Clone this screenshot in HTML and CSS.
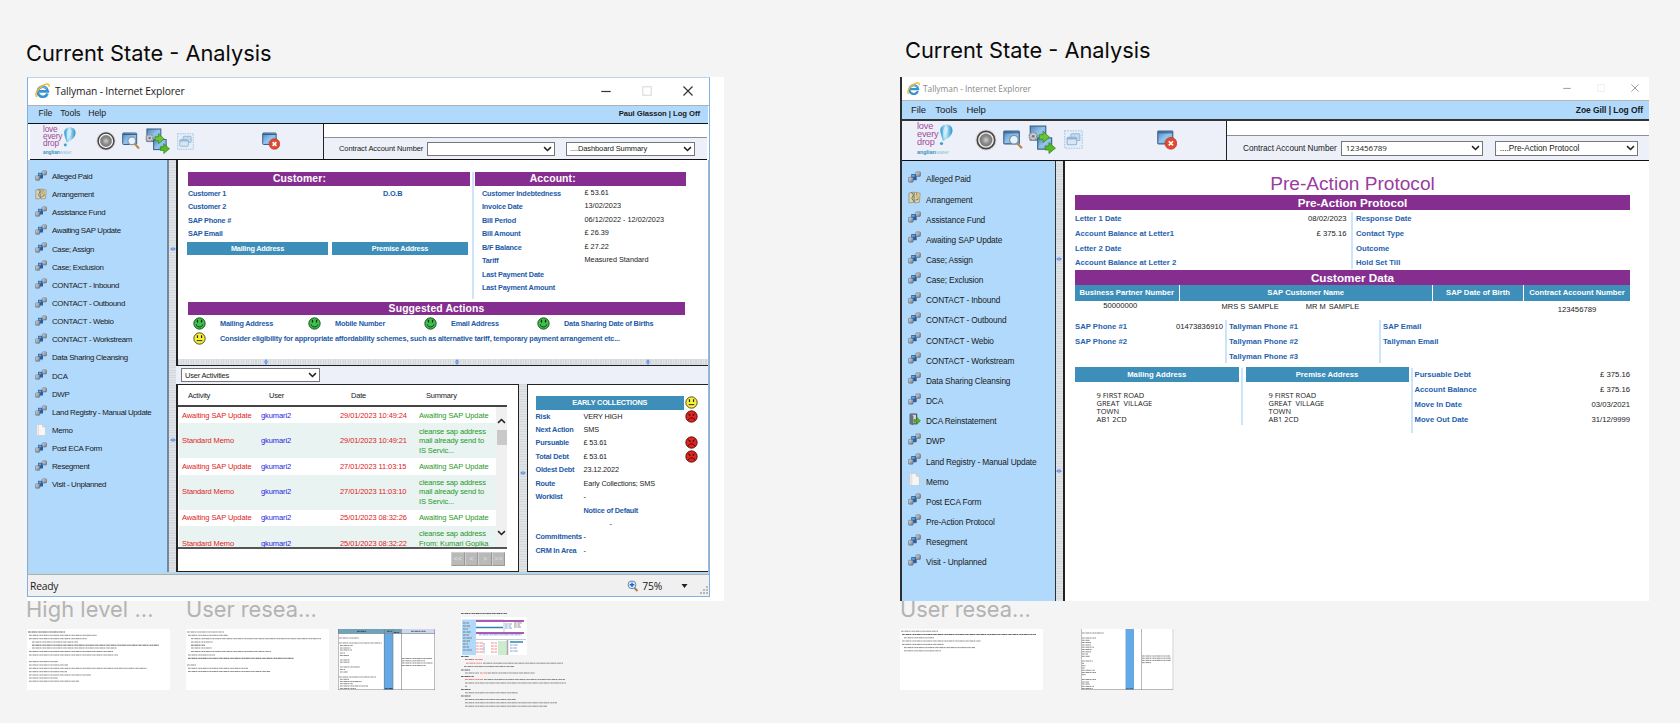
FILE: index.html
```html
<!DOCTYPE html>
<html lang="en">
<head>
<meta charset="utf-8">
<title>Current State - Analysis</title>
<link rel="stylesheet" href="styles.css">
</head>
<body>
<svg class="defs" width="0" height="0">
  <defs>
    <linearGradient id="gScreen" x1="0" y1="0" x2="1" y2="1"><stop offset="0" stop-color="#4a84bd"/><stop offset=".5" stop-color="#94c4ec"/><stop offset="1" stop-color="#6ba3d6"/></linearGradient>
    <linearGradient id="gBox" x1="0" y1="0" x2="1" y2="1"><stop offset="0" stop-color="#dcdfe4"/><stop offset="1" stop-color="#6f7782"/></linearGradient>
    <radialGradient id="gBall"><stop offset="0" stop-color="#d0d0d0"/><stop offset=".6" stop-color="#8c8c8c"/><stop offset="1" stop-color="#777"/></radialGradient>
    <linearGradient id="gDrop" x1="0" y1="0" x2="1" y2="0"><stop offset="0" stop-color="#2a9bd4"/><stop offset=".45" stop-color="#bfe8f8"/><stop offset="1" stop-color="#2b93cf"/></linearGradient>
  </defs>
  <symbol id="ie" viewBox="0 0 16 16">
    <path d="M13.400 11.200A5.400 5.400 0 1 1 13.700 8.900H4.500" fill="none" stroke="#3a93cf" stroke-width="2.800"/>
    <path d="M12.500 6A5 5 0 0 0 4.500 6.500" fill="none" stroke="#7cc4ee" stroke-width="1"/>
    <path d="M2 14.800C-.8 12.500 3 5.500 8.500 2.600 12.500.2 15.800.3 15 4" fill="none" stroke="#f0b92d" stroke-width="1.600"/>
  </symbol>
  <symbol id="drop" viewBox="0 0 14 22">
    <path d="M7.500.5c3.800 0 6 2.600 6 5.800 0 5-4.500 8.500-9.500 10.700C3 13 1.300 9.800 1.300 6.300 1.300 3 3.700.5 7.500.5z" fill="url(#gDrop)"/>
    <path d="M6 3c2-1 3.500.5 3 3.500S6 13 4.800 14.500C4 11 3.500 5 6 3z" fill="#d9f2fb" opacity=".7"/>
    <circle cx="2.500" cy="19.500" r="1.600" fill="#3a9fd6"/>
  </symbol>
  <symbol id="ball" viewBox="0 0 20 20">
    <circle cx="10" cy="10" r="9.600" fill="#d6d6d6"/>
    <circle cx="10" cy="10" r="7.900" fill="#f8f8f8" stroke="#454545" stroke-width="1.500"/>
    <circle cx="10" cy="10" r="5.700" fill="url(#gBall)" stroke="#777" stroke-width=".4"/>
  </symbol>
  <symbol id="search" viewBox="0 0 18 18">
    <rect x=".7" y="1" width="14" height="11.500" rx=".8" fill="url(#gScreen)" stroke="#3c6289"/>
    <path d="M1 2.500h13.500" stroke="#31618f"/>
    <path d="M12.500 11.500l4.500 5" stroke="#b58a50" stroke-width="2"/>
    <circle cx="9.800" cy="8.800" r="3.900" fill="#e4f3fd" stroke="#7f94a8" stroke-width="1.100"/>
  </symbol>
  <symbol id="transfer" viewBox="0 0 26 27">
    <rect x="2" y="1" width="14.500" height="13" fill="url(#gScreen)" stroke="#355a80"/>
    <rect x="9" y="12" width="13" height="10.500" fill="url(#gScreen)" stroke="#355a80"/>
    <circle cx="4.800" cy="10.500" r="3.600" fill="#c9cdd2" stroke="#8b9096" stroke-width="1.600" stroke-dasharray="1.500 .8"/>
    <circle cx="4.800" cy="10.500" r="1.300" fill="#71787f"/>
    <path d="M10.500 9h3.500V6l6 5.300-6 5v-3h-3.500z" fill="#69c531" stroke="#37851a" stroke-width=".7"/>
    <path d="M16 19.500h3.500v-3.200l6 5.300-6 5v-3.300H16z" fill="#58b82a" stroke="#37851a" stroke-width=".7"/>
  </symbol>
  <symbol id="stack" viewBox="0 0 18 18">
    <rect x=".7" y=".7" width="16.600" height="16.600" fill="#e4eef8" stroke="#a5c3df" stroke-width="1" stroke-dasharray="1.500 1"/>
    <rect x="6.500" y="3.500" width="8.500" height="6.500" rx="1" fill="#c5daee" stroke="#95b6d6"/>
    <rect x="3" y="7" width="9" height="7" rx="1" fill="#d8e6f3" stroke="#95b6d6"/>
    <path d="M3 8.300h9" stroke="#86aacd" stroke-width="1.200"/>
  </symbol>
  <symbol id="close" viewBox="0 0 18 18">
    <rect x=".7" y="1" width="13.500" height="11.500" rx=".8" fill="url(#gScreen)" stroke="#3c6289"/>
    <path d="M1 2.500h13" stroke="#31618f"/>
    <circle cx="12.500" cy="12" r="5.300" fill="#e2492f" stroke="#b5321e" stroke-width=".6"/>
    <path d="M10.600 10.100l3.800 3.800m0-3.800l-3.800 3.800" stroke="#fff" stroke-width="1.500"/>
  </symbol>
  <symbol id="node" viewBox="0 0 12 12">
    <path d="M3 2.800h5V8.500H3z" fill="#2a5c9e"/>
    <path d="M3.600 3.500h2.600v1.800H3.600z" fill="#66a8dd"/>
    <rect x=".4" y="5.800" width="4.400" height="4.500" rx=".8" fill="url(#gBox)" stroke="#59616c" stroke-width=".5"/>
    <rect x="7.200" y=".8" width="4.300" height="4.200" rx=".8" fill="url(#gBox)" stroke="#59616c" stroke-width=".5"/>
  </symbol>
  <symbol id="arrange" viewBox="0 0 12 12">
    <path d="M.8 2l4.500-1v9.500L.8 11zM6 1l5.200 1-.7 8.500-4.500.5z" fill="#d9d2b8" stroke="#8f8563" stroke-width=".6"/>
    <path d="M3 1l2 2.500L3.500 7 6 10M8 2v4l2 .5M7 8.500l2.500-1" fill="none" stroke="#6f663f" stroke-width=".8"/>
    <path d="M7.500 3.500h2.500v3H7.500z" fill="#e5bd55"/>
  </symbol>
  <symbol id="memo" viewBox="0 0 12 12">
    <path d="M1.700.4h6L10.500 3v8.600H1.700z" fill="#f6f6f4" stroke="#b9c0c6" stroke-width=".5"/>
    <path d="M3.400.6v10.800" stroke="#e6b9b5" stroke-width=".5"/>
    <path d="M7.700.4V3h2.800" fill="#ddd" stroke="#aaa" stroke-width=".4"/>
  </symbol>
  <symbol id="reinstate" viewBox="0 0 12 12">
    <path d="M2 1h6v9H2z" fill="#d4d9dd" stroke="#30353a" stroke-width=".9"/>
    <path d="M2 1l3 1.500V11.500L2 10z" fill="#6a737b"/>
    <path d="M5.500 6h2.500V3.800l3.500 3.500L8 10.500V8.500H5.500z" fill="#4fae26" stroke="#2c7414" stroke-width=".4"/>
  </symbol>
  <symbol id="happy" viewBox="0 0 14 14">
    <circle cx="7" cy="7" r="6.100" fill="#3fc04c" stroke="#16451a" stroke-width="1"/>
    <path d="M4.800 3v3M9.200 3v3" stroke="#0b2a0d" stroke-width="1.400"/>
    <path d="M3.300 8c1 3.600 6.400 3.600 7.400 0" fill="none" stroke="#0b2a0d" stroke-width="1"/>
  </symbol>
  <symbol id="neutral" viewBox="0 0 14 14">
    <circle cx="7" cy="7" r="6.100" fill="#f7f03a" stroke="#45420f" stroke-width="1"/>
    <path d="M4.800 3.500v3M9.200 3.500v3" stroke="#222" stroke-width="1.300"/>
    <path d="M4 9.300h6" stroke="#222" stroke-width="1"/>
  </symbol>
  <symbol id="sad" viewBox="0 0 14 14">
    <circle cx="7" cy="7" r="6.100" fill="#e22420" stroke="#4a0d0b" stroke-width="1"/>
    <path d="M3.500 4l2.300 1.500M10.500 4L8.200 5.500M5 5v1.300M9 5v1.300" stroke="#3a0504" stroke-width="1"/>
    <path d="M3.600 10.800c1-3.200 5.800-3.200 6.800 0" fill="none" stroke="#3a0504" stroke-width="1"/>
  </symbol>
  <symbol id="chev" viewBox="0 0 10 7"><path d="M1 1.300l4 4 4-4" fill="none" stroke="#222" stroke-width="1.700"/></symbol>
  <symbol id="grip" viewBox="0 0 6 4"><path d="M0 2L2.700 0v4zM6 2L3.300 0v4z" fill="#5f90ee"/></symbol>
  <symbol id="wmin" viewBox="0 0 10 10"><path d="M.3 5.500h9.400" stroke="currentColor" stroke-width="1.200"/></symbol>
  <symbol id="wmax" viewBox="0 0 10 10"><rect x=".8" y=".8" width="8.400" height="8.400" fill="none" stroke="currentColor"/></symbol>
  <symbol id="wclose" viewBox="0 0 10 10"><path d="M.5.500l9 9m0-9l-9 9" stroke="currentColor" stroke-width="1.200"/></symbol>
</svg>

<main class="canvas">
  <h2 class="caption cap-a">Current State - Analysis</h2>
  <h2 class="caption cap-b">Current State - Analysis</h2>

  <p class="label lab-a">High level ...</p>
  <p class="label lab-b">User resea...</p>
  <p class="label lab-c">User resea...</p>

  <div class="sheet"></div>

  <section class="win one">
    <header class="title">
      <svg class="ie"><use href="#ie"/></svg><span>Tallyman - Internet Explorer</span>
      <div class="ctl"><svg><use href="#wmin"/></svg><svg class="dim"><use href="#wmax"/></svg><svg><use href="#wclose"/></svg></div>
    </header>
    <nav class="menu"><span>File</span><span>Tools</span><span>Help</span><b>Paul Glasson | Log Off</b></nav>
    <div class="tools">
      <div class="icons">
        <div class="logo"><div class="love">love<br>every<br>drop</div><svg><use href="#drop"/></svg><div class="water"><b>anglian</b>water</div></div>
        <svg class="i-ball"><use href="#ball"/></svg><svg class="i-search"><use href="#search"/></svg><svg class="i-transfer"><use href="#transfer"/></svg><svg class="i-stack"><use href="#stack"/></svg><svg class="i-close"><use href="#close"/></svg>
      </div>
      <div class="find">
        <div class="blank"></div>
        <div class="fields"><span>Contract Account Number</span><div class="select s1"><svg><use href="#chev"/></svg></div><div class="select s2">....Dashboard Summary<svg><use href="#chev"/></svg></div></div>
      </div>
    </div>
    <div class="body">
      <ul class="side">
        <li><svg><use href="#node"/></svg>Alleged Paid</li>
        <li><svg><use href="#arrange"/></svg>Arrangement</li>
        <li><svg><use href="#node"/></svg>Assistance Fund</li>
        <li><svg><use href="#node"/></svg>Awaiting SAP Update</li>
        <li><svg><use href="#node"/></svg>Case; Assign</li>
        <li><svg><use href="#node"/></svg>Case; Exclusion</li>
        <li><svg><use href="#node"/></svg>CONTACT - Inbound</li>
        <li><svg><use href="#node"/></svg>CONTACT - Outbound</li>
        <li><svg><use href="#node"/></svg>CONTACT - Webio</li>
        <li><svg><use href="#node"/></svg>CONTACT - Workstream</li>
        <li><svg><use href="#node"/></svg>Data Sharing Cleansing</li>
        <li><svg><use href="#node"/></svg>DCA</li>
        <li><svg><use href="#node"/></svg>DWP</li>
        <li><svg><use href="#node"/></svg>Land Registry - Manual Update</li>
        <li><svg><use href="#memo"/></svg>Memo</li>
        <li><svg><use href="#node"/></svg>Post ECA Form</li>
        <li><svg><use href="#node"/></svg>Resegment</li>
        <li><svg><use href="#node"/></svg>Visit - Unplanned</li>
      </ul>
      <div class="vsplit grips"><svg><use href="#grip"/></svg><svg><use href="#grip"/></svg></div>
      <div class="main">
        <div class="dash">
          <div class="two">
            <div class="customer">
              <h3 class="bar">Customer:</h3>
              <div class="rows"><p class="lb duo"><span>Customer 1</span><span>D.O.B</span></p><p class="lb">Customer 2</p><p class="lb">SAP Phone #</p><p class="lb">SAP Email</p></div>
              <div class="addr"><h4 class="teal">Mailing Address</h4><h4 class="teal">Premise Address</h4></div>
            </div>
            <div class="account">
              <h3 class="bar">Account:</h3>
              <dl class="rows pairs">
                <dt>Customer Indebtedness</dt><dd>£ 53.61</dd>
                <dt>Invoice Date</dt><dd>13/02/2023</dd>
                <dt>Bill Period</dt><dd>06/12/2022 - 12/02/2023</dd>
                <dt>Bill Amount</dt><dd>£ 26.39</dd>
                <dt>B/F Balance</dt><dd>£ 27.22</dd>
                <dt>Tariff</dt><dd>Measured Standard</dd>
                <dt>Last Payment Date</dt><dd></dd>
                <dt>Last Payment Amount</dt><dd></dd>
              </dl>
            </div>
          </div>
          <h3 class="bar">Suggested Actions</h3>
          <div class="sugg">
            <svg><use href="#happy"/></svg><span>Mailing Address</span>
            <svg><use href="#happy"/></svg><span>Mobile Number</span>
            <svg><use href="#happy"/></svg><span>Email Address</span>
            <svg><use href="#happy"/></svg><span>Data Sharing Date of Births</span>
            <svg><use href="#neutral"/></svg><span class="wide">Consider eligibility for appropriate affordability schemes, such as alternative tariff, temporary payment arrangement etc...</span>
          </div>
        </div>
        <div class="hsplit"><svg><use href="#grip"/></svg><svg><use href="#grip"/></svg><svg><use href="#grip"/></svg></div>
        <div class="pick"><div class="select s3">User Activities<svg><use href="#chev"/></svg></div></div>
        <div class="lower">
          <div class="acts">
            <div class="ahead"><span>Activity</span><span>User</span><span>Date</span><span>Summary</span></div>
            <div class="ascroll">
              <div class="alist">
                <div class="r short"><i>Awaiting SAP Update</i><b>gkumari2</b><i>29/01/2023 10:49:24</i><u>Awaiting SAP Update</u></div>
                <div class="r alt"><i>Standard Memo</i><b>gkumari2</b><i>29/01/2023 10:49:21</i><u>cleanse sap address<br>mail already send to<br>IS Servic...</u></div>
                <div class="r short"><i>Awaiting SAP Update</i><b>gkumari2</b><i>27/01/2023 11:03:15</i><u>Awaiting SAP Update</u></div>
                <div class="r alt"><i>Standard Memo</i><b>gkumari2</b><i>27/01/2023 11:03:10</i><u>cleanse sap address<br>mail already send to<br>IS Servic...</u></div>
                <div class="r short"><i>Awaiting SAP Update</i><b>gkumari2</b><i>25/01/2023 08:32:26</i><u>Awaiting SAP Update</u></div>
                <div class="r alt"><i>Standard Memo</i><b>gkumari2</b><i>25/01/2023 08:32:22</i><u>cleanse sap address<br>From: Kumari Gopika<br>&nbsp;</u></div>
              </div>
              <div class="sbar"><svg class="up"><use href="#chev"/></svg><div class="thumb"></div><svg><use href="#chev"/></svg></div>
            </div>
            <div class="pager"><span>&lt;&lt;</span><span>&lt;</span><span>&gt;</span><span>&gt;&gt;</span></div>
          </div>
          <div class="vsplit inner grips"><svg><use href="#grip"/></svg></div>
          <div class="early">
            <div class="ehead"><h4 class="teal">EARLY COLLECTIONS</h4><svg><use href="#neutral"/></svg></div>
            <div class="erows">
              <b>Risk</b><span>VERY HIGH</span><svg><use href="#sad"/></svg>
              <b>Next Action</b><span>SMS</span><em></em>
              <b>Pursuable</b><span>£ 53.61</span><svg><use href="#sad"/></svg>
              <b>Total Debt</b><span>£ 53.61</span><svg><use href="#sad"/></svg>
              <b>Oldest Debt</b><span>23.12.2022</span><em></em>
              <b>Route</b><span>Early Collections; SMS</span><em></em>
              <b>Worklist</b><span>-</span><em></em>
              <em></em><b>Notice of Default</b><em></em>
              <em></em><span class="mid">-</span><em></em>
              <b>Commitments</b><span>-</span><em></em>
              <b>CRM In Area</b><span>-</span><em></em>
            </div>
          </div>
        </div>
      </div>
    </div>
    <footer class="status"><span>Ready</span>
      <svg class="mag" viewBox="0 0 12 12"><path d="M7 7.500l3.500 3.500" stroke="#b5793d" stroke-width="2"/><circle cx="5" cy="4.800" r="3.900" fill="#e4f1fc" stroke="#5f86b5"/><path d="M5 2.500v4.600M2.700 4.800h4.600" stroke="#1766c4" stroke-width="1.400"/></svg>
      <span>75%</span>
      <svg class="tri" viewBox="0 0 6 4"><path d="M0 0h6L3 4z" fill="#222"/></svg>
      <svg class="size" viewBox="0 0 8 8"><path d="M6 0h2v2H6zM3 3h2v2H3zM6 3h2v2H6zM0 6h2v2H0zM3 6h2v2H3zM6 6h2v2H6z" fill="#b8b8b8"/></svg>
    </footer>
  </section>

  <section class="win two-w">
    <header class="title">
      <svg class="ie"><use href="#ie"/></svg><span>Tallyman - Internet Explorer</span>
      <div class="ctl"><svg><use href="#wmin"/></svg><svg class="dim"><use href="#wmax"/></svg><svg><use href="#wclose"/></svg></div>
    </header>
    <nav class="menu"><span>File</span><span>Tools</span><span>Help</span><b>Zoe Gill | Log Off</b></nav>
    <div class="tools">
      <div class="icons">
        <div class="logo"><div class="love">love<br>every<br>drop</div><svg><use href="#drop"/></svg><div class="water"><b>anglian</b>water</div></div>
        <svg class="i-ball"><use href="#ball"/></svg><svg class="i-search"><use href="#search"/></svg><svg class="i-transfer"><use href="#transfer"/></svg><svg class="i-stack"><use href="#stack"/></svg><svg class="i-close"><use href="#close"/></svg>
      </div>
      <div class="find">
        <div class="blank"></div>
        <div class="fields"><span>Contract Account Number</span><div class="select s1"><em>123456789</em><svg><use href="#chev"/></svg></div><div class="select s2">....Pre-Action Protocol<svg><use href="#chev"/></svg></div></div>
      </div>
    </div>
    <div class="body">
      <ul class="side">
        <li><svg><use href="#node"/></svg>Alleged Paid</li>
        <li><svg><use href="#arrange"/></svg>Arrangement</li>
        <li><svg><use href="#node"/></svg>Assistance Fund</li>
        <li><svg><use href="#node"/></svg>Awaiting SAP Update</li>
        <li><svg><use href="#node"/></svg>Case; Assign</li>
        <li><svg><use href="#node"/></svg>Case; Exclusion</li>
        <li><svg><use href="#node"/></svg>CONTACT - Inbound</li>
        <li><svg><use href="#node"/></svg>CONTACT - Outbound</li>
        <li><svg><use href="#node"/></svg>CONTACT - Webio</li>
        <li><svg><use href="#node"/></svg>CONTACT - Workstream</li>
        <li><svg><use href="#node"/></svg>Data Sharing Cleansing</li>
        <li><svg><use href="#node"/></svg>DCA</li>
        <li><svg><use href="#reinstate"/></svg>DCA Reinstatement</li>
        <li><svg><use href="#node"/></svg>DWP</li>
        <li><svg><use href="#node"/></svg>Land Registry - Manual Update</li>
        <li><svg><use href="#memo"/></svg>Memo</li>
        <li><svg><use href="#node"/></svg>Post ECA Form</li>
        <li><svg><use href="#node"/></svg>Pre-Action Protocol</li>
        <li><svg><use href="#node"/></svg>Resegment</li>
        <li><svg><use href="#node"/></svg>Visit - Unplanned</li>
      </ul>
      <div class="vsplit grips"><svg><use href="#grip"/></svg><svg><use href="#grip"/></svg></div>
      <div class="proto">
        <h1>Pre-Action Protocol</h1>
        <h3 class="bar">Pre-Action Protocol</h3>
        <div class="letters">
          <dl><dt>Letter 1 Date</dt><dd>08/02/2023</dd><dt>Account Balance at Letter1</dt><dd>£ 375.16</dd><dt>Letter 2 Date</dt><dd></dd><dt>Account Balance at Letter 2</dt><dd></dd></dl>
          <dl class="lined"><dt>Response Date</dt><dd></dd><dt>Contact Type</dt><dd></dd><dt>Outcome</dt><dd></dd><dt>Hold Set Till</dt><dd></dd></dl>
        </div>
        <h3 class="bar">Customer Data</h3>
        <div class="ctable">
          <h4 class="teal">Business Partner Number</h4><h4 class="teal">SAP Customer Name</h4><h4 class="teal">SAP Date of Birth</h4><h4 class="teal">Contract Account Number</h4>
          <span class="hv bp">50000000</span><span class="names"><span>MRS S</span><span>SAMPLE</span><span>MR M</span><span>SAMPLE</span></span><span></span><span class="hv acc">123456789</span>
        </div>
        <div class="phones">
          <dl><dt>SAP Phone #1</dt><dd>01473836910</dd><dt>SAP Phone #2</dt><dd></dd></dl>
          <dl class="lined"><dt>Tallyman Phone #1</dt><dd></dd><dt>Tallyman Phone #2</dt><dd></dd><dt>Tallyman Phone #3</dt><dd></dd></dl>
          <dl class="lined"><dt>SAP Email</dt><dd></dd><dt>Tallyman Email</dt><dd></dd></dl>
        </div>
        <div class="places">
          <div><h4 class="teal">Mailing Address</h4><address>9 FIRST ROAD<br>GREAT&nbsp; VILLAGE<br>TOWN<br>AB1 2CD</address></div>
          <div class="rule"></div>
          <div><h4 class="teal">Premise Address</h4><address class="shift">9 FIRST ROAD<br>GREAT&nbsp; VILLAGE<br>TOWN<br>AB1 2CD</address></div>
          <dl class="lined"><dt>Pursuable Debt</dt><dd>£ 375.16</dd><dt>Account Balance</dt><dd>£ 375.16</dd><dt>Move In Date</dt><dd>03/03/2021</dd><dt>Move Out Date</dt><dd>31/12/9999</dd></dl>
        </div>
      </div>
    </div>
  </section>

  <svg class="note n1" viewBox="0 0 143 61"><path class="ink bold" d="M1 3h37"/><path class="ink" d="M2 6.300h68M2 9.700h58M5 13h46M5 19h85M2 22.500h84M2 26h89M2 32.600h29M2 36h39M2 39.300h118M2 42.700h38M2 46h62M2 49h29M2 52.200h50"/><path class="ink bold" d="M5 16.200h127"/></svg>
  <svg class="note n2" viewBox="0 0 143 61"><path class="ink" d="M1 3h37M2 6.300h40M5 9.700h130M5 13h22M5 19h21M5 22.500h80M2 26h27M1 36h9M2 39.300h60M2 42.500h82"/><path class="ink bold" d="M5 16.200h14M2 29.300h106"/></svg>
  <svg class="note n3" viewBox="0 0 97 61">
    <path d="M0 0h63v4.500H0z" fill="#6ea3bd"/><path d="M63 0h34v4.500H63z" fill="#cbd8f0"/><path d="M46 4.500h9V61h-9z" fill="#65a9e6"/><path d="M0 4.500h97M46.300 0v61M55 0v61M63.500 0v61M.3 0v61M96.700 0v61M0 60.700h97" stroke="#777" stroke-width=".6" fill="none"/>
    <path class="ink bold" d="M19 2.300h9M49 2.300h5M56 3.500h5M73 2.300h15M47 59.500h8"/>
    <path class="ink" d="M1 9h20M1 14h43M2 16.500h13M2 19h11M2 21h12M2 24h5M2 26.500h9M2 31h10M2 33.200h10M2 38h20M2 40.500h5M2 43h8M1 48h37M2 50.300h9M2 52.500h22M2 54.700h13M2 57h28M2 59.500h16"/><path class="ink" d="M64 29.500h30M64 31.800h23M64 34h31M64 36.500h24"/></svg>
  <svg class="note n4" viewBox="0 0 107 97">
    <path class="ink bold" d="M0 1.500h46"/>
    <path d="M0 5h66v38H0z" fill="#fff"/><path d="M1 7.500h14v35.500H1z" fill="#b1d9fa"/><path d="M15 8h28v13H15M15 27.500h50" fill="none" stroke="#9aa" stroke-width=".6"/>
    <path d="M15 9h48M15 21h48" stroke="#a95bb5" stroke-width="2"/><path d="M15 15.500h27M49 30h13" stroke="#2a86b0" stroke-width="1.500"/>
    <path class="ink" d="M2 11h6M2 14h7M2 17h5M2 20h8M2 23h6M2 26h9M2 29h7M2 32h5M2 35h6M2 38h9M53 11h8M53 13h6M53 15h7"/>
    <path class="ink blue" d="M18 22.800h43M44 12h7M44 14h6M44 16h7M23 31v11M49 33h8M49 36h7M49 39h8"/><path class="ink red" d="M15 31h7M15 34h7M15 37h7M15 40h7M30 31h6M30 34h6M30 37h6M30 40h6"/><path d="M37 29h9v14h-9z" fill="#cdebcf"/><path d="M46.500 28v15" stroke="#aaa" stroke-width="1.500"/>
    <path class="ink bold" d="M0 44.500h8M0 58h9M0 64.500h13M0 77.500h10M0 84h10"/>
    <path class="ink" d="M4 47.500h9M22 51.200h80M3 54.500h50M4 61h14M27 61h47M23 67.500h81M4 71h101M4 74.300h2M4 80.800h53M4 87.500h51M4 90.800h92M4 94.200h82"/><path class="ink red" d="M14 47.500h8M5 51.200h16M19 61h8M4 67.500h18"/></svg>
  <svg class="note n5" viewBox="0 0 143 61"><path class="ink" d="M1 2.200h37M4 8.800h30M2 12h79M2 15.400h42M4 18.600h71M4 21.800h37"/><path class="ink bold" d="M2 5.500h134"/></svg>
  <svg class="note n6" viewBox="0 0 93 61">
    <path d="M44.500 0h8.500v61.500h-8.500z" fill="#65a9e6"/><path d="M.4 0v61M60.500 0v61M0 60.500h92" stroke="#888" stroke-width=".6"/><path d="M92 0v61" stroke="#a9c0a9" stroke-width=".7"/>
    <path class="ink" d="M1 4h22M1 9h14M1 11.300h8M1 13.500h9M1 16h9M1 18.200h12M1 20.500h10M1 22.800h9M1 25h6M1 27.300h8M1 32h11M1 34.300h2M1 36.700h4M1 39h3M1 41.300h13M1 43.500h14M1 45.700h4M1 50.500h14M1 53h7M1 55h8M1 57.400h12M1 59.500h11M45 59.500h7"/><path class="ink" d="M61 27h28M61 29.200h29M61 31.400h29M61 33.600h9"/></svg>
</main>
</body>
</html>
```
FILE: styles.css
```css
* { box-sizing: border-box; margin: 0; padding: 0; }
body { background: #f4f4f4; font-family: "Liberation Sans", Arial, sans-serif; overflow: hidden; }
.defs { display: block; position: absolute; }
svg { display: block; flex: none; }
ul { list-style: none; }
em, i, address { font-style: normal; }
u { text-decoration: none; }

/* Board: free canvas with placed items */
.canvas { position: relative; width: 1680px; height: 723px; overflow: hidden; }
.caption, .label, .sheet, .win, .note { position: absolute; }
.caption { font: 400 21.800px/28px Inter, sans-serif; color: #0a0a0a; white-space: nowrap; }
.cap-a { left: 26px; top: 39px; }
.cap-b { left: 905px; top: 36px; }
.label { font: 400 21.800px/28px Inter, sans-serif; color: #b3b3b3; white-space: nowrap; top: 595px; }
.lab-a { left: 26px; letter-spacing: .1px; }
.lab-b { left: 186px; }
.lab-c { left: 900px; }
.sheet { left: 27px; top: 77px; width: 697px; height: 524px; background: #fff; }
.note { overflow: hidden; background: #fff; }
.n1 { left: 27px; top: 629px; width: 143px; height: 61px; }
.n2 { left: 186px; top: 629px; width: 143px; height: 61px; }
.n3 { left: 338px; top: 629px; width: 97px; height: 61px; }
.n4 { left: 461px; top: 612px; width: 107px; height: 97px; background: none; }
.n5 { left: 900px; top: 629px; width: 143px; height: 61px; }
.n6 { left: 1081px; top: 629px; width: 93px; height: 61px; }
.ink { fill: none; stroke: #444; stroke-width: .9; stroke-dasharray: 2 .3 1.100 .4 3.500 .3 1.500 .5 .8 .3; opacity: .65; }
.ink.bold { stroke: #222; stroke-width: .9; opacity: .75; }
.ink.red { stroke: #e33; }
.ink.blue { stroke: #3a62c8; }

/* Application window */
.win { display: flex; flex-direction: column; background: #fff; color: #1a1a1a; white-space: nowrap; }
.title { display: flex; align-items: center; flex: none; font-family: "Open Sans", "Noto Sans", sans-serif; }
.ctl { display: flex; align-items: center; margin-left: auto; color: #333; }
.ctl .dim { color: #d6d6d6; }
.menu { display: flex; align-items: center; flex: none; background: #b1d9fb; }
.menu b { margin-left: auto; }
.tools { display: flex; flex: none; background: #edf0f8; border-bottom: 1px solid #111; }
.icons { display: flex; align-items: center; flex: none; border-right: 1px solid #222; }
.find { flex: 1; display: flex; flex-direction: column; }
.blank { background: #fff; border-bottom: 1px solid #8a8f98; }
.fields { flex: 1; display: flex; align-items: center; }
.select { display: flex; align-items: center; justify-content: space-between; background: #fff; border: 1px solid #777; }
.select svg { width: 9px; height: 6px; margin-left: auto; }
.logo { display: grid; grid-template-columns: 20px 13px; }
.love { font: 400 8.300px/7px "Liberation Sans", Arial, sans-serif; color: #a04a9c; letter-spacing: -.2px; }
.logo svg { width: 13px; height: 22px; }
.water { grid-column: 1 / 3; color: #8fc3de; letter-spacing: 0; }
.water b { color: #3a8fb8; }
.body { display: flex; flex: none; }
.side { background: #b1d9fb; flex: none; }
.side li { display: flex; align-items: center; }
.side svg { position: relative; top: -1px; }
.vsplit { flex: none; background: repeating-linear-gradient(#d3d8dc 0 1px, #e0e4e7 1px 2.500px); }
.grips { display: flex; flex-direction: column; align-items: center; }
.grips svg { width: 6px; height: 4px; }
.bar { background: #862e8f; color: #fff; text-align: center; font-weight: bold; }
.teal { background: #3d8eb8; color: #fff; text-align: center; font-weight: bold; }

/* Left window */
.one { left: 27px; top: 77px; width: 683px; height: 520px; border: 1px solid #7fb2e3; border-top-color: #b9d7f2; font-size: 7.500px; letter-spacing: -.2px; }
.one .title { height: 28px; padding: 0 16px 2px 7px; font-size: 10.300px; letter-spacing: -.15px; border-bottom: 1px solid #b0b0b0; }
.one .ie { width: 15px; height: 15px; margin-right: 5px; }
.one .ctl { gap: 31px; }
.one .ctl svg { width: 10px; height: 10px; }
.one .menu { height: 18px; padding: 0 8px 3px 10.500px; font-size: 8.700px; letter-spacing: -.05px; gap: 8px; border-bottom: 1px solid #111; margin-right: 1px; }
.one .menu b { font-size: 7.700px; letter-spacing: -.05px; }
.one .tools { height: 36px; margin: 0 2px 0 2px; }
.one .icons { width: 294px; padding: 0 0 1px 13px; }
.one .logo { width: 33px; height: 30px; grid-template-rows: 22px 8px; margin-right: 19.500px; }
.one .water { font-size: 4.800px; line-height: 7px; padding-top: 1px; }
.one .i-ball { width: 20px; height: 20px; margin-right: 6px; }
.one .i-search { width: 18px; height: 18px; margin-right: 5px; }
.one .i-transfer { width: 25px; height: 26px; margin-right: 7px; }
.one .i-stack { width: 17px; height: 17px; margin-right: 68px; }
.one .i-close { width: 18px; height: 18px; }
.one .blank { height: 14px; }
.one .fields { padding-left: 15px; }
.one .fields > span { letter-spacing: -.07px; width: 85px; }
.one .select { height: 14px; flex: none; }
.one .s1 { width: 128px; margin: 0 11px 0 3px; }
.one .s2 { width: 129px; padding-left: 3px; letter-spacing: -.1px; }
.one .select svg { margin-right: 2px; }
.one .body { height: 412px; border-left: 1px solid #c6ccd2; border-right: 1px solid #a9b6c4; }
.one .side { width: 140px; border-right: 2px solid #75899a; padding-top: 7.500px; font-size: 7.900px; letter-spacing: -.34px; }
.one .side li { height: 18.150px; padding-left: 6px; gap: 5px; }
.one .side svg { width: 12px; height: 12px; }
.one .vsplit { width: 7px; }
.one .body > .vsplit { padding-top: 87px; gap: 187px; }
.main { flex: 1; display: flex; flex-direction: column; }
.dash { height: 199px; border-left: 2px solid #222; padding: 12px 0 0 10px; }
.one .bar { height: 13.500px; line-height: 13.500px; font-size: 10.400px; letter-spacing: .12px; }
.dash > .bar { width: 497px; }
.two { display: flex; height: 129.500px; }
.customer { width: 282px; margin-right: 1.500px; }
.customer .bar { padding-right: 59px; }
.account .bar { padding-right: 55px; }
.account { width: 214.500px; height: 127px; border-left: 2px solid #cbe5fb; padding-left: 1px; }
.rows { padding-top: 1.500px; color: #1c5aa8; font-weight: bold; font-size: 7.300px; }
.rows p { height: 13.450px; line-height: 13.450px; }
.duo { display: grid; grid-template-columns: 195px 1fr; }
.addr { display: grid; grid-template-columns: 141px 136px; gap: 4px; margin: 1.200px 0 0 -1px; }
.addr .teal { height: 13.500px; line-height: 13px; font-size: 7.300px; }
.pairs { display: grid; grid-template-columns: 102.500px 1fr; grid-auto-rows: 13.450px; line-height: 13.450px; padding-left: 7.500px; }
.pairs dd { color: #222; font-weight: normal; line-height: 12.500px; letter-spacing: 0; }
.sugg { display: grid; grid-template-columns: 22px 93px 22px 94px 22px 91px 22px 1fr; grid-auto-rows: 15.500px; align-items: center; padding: .5px 0 0 5px; color: #1c5aa8; font-weight: bold; font-size: 7.300px; }
.sugg svg { width: 13px; height: 13px; }
.sugg span { padding-left: 5px; }
.sugg .wide { grid-column: 2 / -1; letter-spacing: -.17px; }
.hsplit { height: 7px; border-left: 2px solid #222; border-bottom: 1px solid #222; background: repeating-linear-gradient(90deg, #d3d8dc 0 1px, #e0e4e7 1px 2.500px); display: flex; align-items: center; padding-left: 85px; gap: 185px; }
.hsplit svg { width: 6px; height: 4px; transform: rotate(90deg); }
.pick { height: 18px; background: #edf0f8; padding: 2px 0 0 5px; }
.one .s3 { width: 139px; height: 14px; padding-left: 3px; }
.lower { flex: 1; display: flex; }
.acts { width: 343px; border: 1.500px solid #222; border-left-width: 2px; }
.ahead { height: 22px; width: 329px; border-bottom: 2px solid #444; display: grid; grid-template-columns: 81px 82px 75px 1fr; padding: 1px 0 0 10px; align-items: center; }
.ascroll { display: flex; width: 329px; height: 142px; border-bottom: 2px solid #555; overflow: hidden; }
.alist { width: 318px; padding-left: 1px; flex: none; }
.r { display: grid; grid-template-columns: 79px 79px 79px 1fr; align-items: center; height: 35px; padding-left: 3px; font-size: 7.500px; letter-spacing: -.1px; line-height: 9.500px; }
.r.short { height: 16.300px; padding-top: 1px; }
.r.alt { background: #e9f3f2; }
.r i { color: #e02222; }
.r b { color: #1c1ce0; font-weight: normal; }
.r u { color: #1f9a1f; }
.sbar { flex: 1; background: #f0f0f0; display: flex; flex-direction: column; align-items: center; padding: 11px 0 11px; }
.sbar svg { width: 9px; height: 6px; margin-top: auto; }
.sbar .up { transform: rotate(180deg); margin: 0 0 6px; }
.thumb { width: 10px; height: 15px; background: #c9c9c9; }
.pager { display: flex; padding: 3px 0 0 273px; }
.pager span { width: 13.500px; height: 14px; line-height: 12px; text-align: center; background: #b9b9b9; border: 1px solid #d0d0d0; border-right-color: #999; border-bottom-color: #999; color: #e2e2e2; }
.one .inner { width: 7.500px; padding-top: 87px; }
.early { flex: 1; border: 1.500px solid #222; border-width: 1.500px 0 1.500px 1.500px; padding: 11px 0 0 8px; }
.ehead { display: flex; align-items: center; height: 13.500px; }
.ehead .teal { width: 148.500px; height: 13.500px; line-height: 13px; font-size: 7.300px; }
.early svg { width: 13px; height: 13px; }
.ehead svg { margin-left: .5px; }
.erows { display: grid; grid-template-columns: 48px 101px 14px; grid-auto-rows: 13.450px; line-height: 13.450px; font-size: 7.300px; }
.erows b { color: #1c5aa8; line-height: 14.500px; }
.erows span { line-height: 13px; letter-spacing: -.12px; }
.erows .mid { padding-left: 26px; }
.status { height: 24px; border-top: 2px solid #b3d8ee; background: #f0f0f0; box-shadow: inset 0 1px #b0b0b0; display: flex; align-items: center; flex: none; font: 400 10.300px "Open Sans", "Noto Sans", sans-serif; padding: 2px 1px 0 2px; }
.status .mag { width: 12px; height: 12px; margin: 0 3px 0 auto; }
.status .tri { width: 7px; height: 4px; margin: 0 12px 0 19px; }
.status .size { width: 8px; height: 8px; align-self: flex-end; margin-bottom: 2px; }

/* Right window */
.two-w { left: 900px; top: 77px; width: 749px; height: 524px; border-left: 2px solid #2c3036; font-size: 8px; }
.two-w .title { height: 24px; padding: 0 10px 1px 5px; font-size: 8.400px; color: #8a8a8a; border-bottom: 1px solid #b5b5b5; }
.two-w .title span { letter-spacing: -.03px; }
.two-w .ie { width: 13px; height: 13px; margin-right: 3px; }
.two-w .ctl { gap: 26px; color: #999; }
.two-w .ctl .dim { color: #ececec; }
.two-w .ctl svg { width: 8px; height: 8px; }
.two-w .menu { height: 20px; padding: 0 6px 1px 9px; font-size: 9.500px; gap: 9.200px; letter-spacing: -.05px; border-bottom: 2px solid #333; }
.two-w .menu b { font-size: 8.500px; letter-spacing: -.07px; }
.two-w .tools { height: 40px; }
.two-w .icons { width: 325px; padding: 0 0 2px 15px; }
.two-w .logo { width: 36px; height: 33px; grid-template: 24px 9px / 22px 14px; margin-right: 22px; }
.two-w .love { font-size: 9.200px; line-height: 7.800px; }
.two-w .logo svg { width: 14px; height: 24px; }
.two-w .water { font-size: 5.400px; line-height: 8px; padding-top: 1px; }
.two-w .i-ball { width: 22px; height: 22px; margin-right: 6px; }
.two-w .i-search { width: 20px; height: 20px; margin-right: 5px; }
.two-w .i-transfer { width: 28px; height: 29px; margin-right: 7.500px; }
.two-w .i-stack { width: 19px; height: 19px; margin-right: 74.500px; }
.two-w .i-close { width: 20px; height: 20px; }
.two-w .blank { height: 15px; }
.two-w .fields { padding-left: 16px; font-size: 8.200px; }
.two-w .select { height: 15px; }
.two-w .select em { font-family: "Open Sans", sans-serif; font-size: 8px; line-height: 11px; align-self: flex-start; }
.two-w .s1 { width: 142px; margin: 0 12px 0 4px; padding-left: 4px; }
.two-w .s2 { width: 143px; padding-left: 4px; }
.two-w .select svg { margin-right: 2px; }
.two-w .body { height: 440px; }
.two-w .side { width: 153.500px; border-right: 1.500px solid #2c3036; padding-top: 8.300px; font-size: 8.300px; letter-spacing: -.15px; }
.two-w .side li { height: 20.160px; padding-left: 6px; gap: 5px; }
.two-w .side svg { width: 13px; height: 13px; top: -2px; }
.two-w .vsplit { width: 7.500px; padding-top: 96px; gap: 208px; }
.proto { flex: 1; border-left: 2px solid #222; padding: 12px 19px 0 10px; font-size: 7.700px; }
.proto h1 { font-size: 19.100px; font-weight: normal; color: #9a3ca0; text-align: center; line-height: 22px; height: 22px; }
.proto .bar { height: 15.300px; line-height: 15px; font-size: 11.700px; }
.proto dl { display: grid; grid-template-columns: 1fr auto; grid-auto-rows: 14.900px; line-height: 14.900px; }
.proto dt { color: #1f62ae; font-weight: bold; }
.proto dd { color: #222; line-height: 13.500px; text-align: right; }
.proto .lined { border-left: 2px solid #cbe5fb; }
.letters { display: grid; grid-template-columns: 271.500px 1fr; column-gap: 4.500px; height: 59.700px; padding-top: 1.500px; }
.letters .lined { height: 57px; padding-left: 3px; }
.ctable { display: grid; grid-template-columns: 103.500px 252.500px 90px 1fr; grid-template-rows: 15.300px 1fr; column-gap: 1px; height: 35px; line-height: 10px; }
.ctable .teal { line-height: 15px; }
.ctable .hv { text-align: center; }
.bp { padding-right: 13px; }
.acc { padding-top: 4px; }
.names { display: flex; padding: 1px 0 0 42px; gap: 3px; font-size: 7.500px; }
.names span:nth-child(3) { margin-left: 24px; }
.phones { display: grid; grid-template-columns: 150px 154px 1fr; height: 47px; padding-top: 0; }
.phones dl:first-child { padding: 0 2px 0 0; }
.phones .lined { padding-left: 2px; height: 43px; }
.places { display: grid; grid-template-columns: 163.500px 2px 163px 1fr; column-gap: 2.500px; }
.places .teal { height: 15px; line-height: 15px; }
.places .rule { background: #cbe5fb; height: 57px; margin-top: 1px; margin-left: 0; }
.places .lined { padding-left: 1.500px; height: 65px; margin-top: 1px; }
.places address { font: 400 7.500px/8.200px "Open Sans", sans-serif; padding: 8.500px 0 0 21.500px; }
.places .shift { padding-left: 23px; }
```
